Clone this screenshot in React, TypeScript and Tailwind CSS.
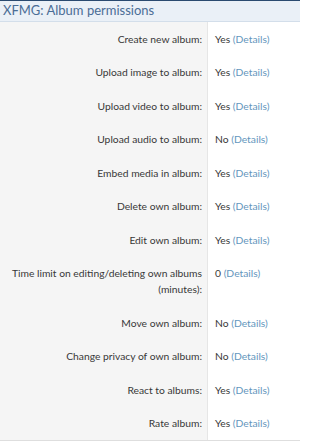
import React from "react";

type Perm = { label: React.ReactNode; value: string };

const perms: Perm[] = [
  { label: "Create new album:", value: "Yes" },
  { label: "Upload image to album:", value: "Yes" },
  { label: "Upload video to album:", value: "Yes" },
  { label: "Upload audio to album:", value: "No" },
  { label: "Embed media in album:", value: "Yes" },
  { label: "Delete own album:", value: "Yes" },
  { label: "Edit own album:", value: "Yes" },
  {
    label: (
      <>
        Time limit on editing/deleting own albums
        <br />
        (minutes):
      </>
    ),
    value: "0",
  },
  { label: "Move own album:", value: "No" },
  { label: "Change privacy of own album:", value: "No" },
  { label: "React to albums:", value: "Yes" },
  { label: "Rate album:", value: "Yes" },
];

export default function App() {
  return (
    <div
      className="w-[300px] h-[441px] overflow-hidden bg-white"
      style={{ fontFamily: 'Lato, "Noto Sans", sans-serif' }}
    >
      {/* Block header */}
      <div className="h-[22px] border-t border-[#2a4a70] border-b border-b-[#d3deea] bg-[#eaf0f7] pl-[3px] text-[13px] leading-[19px] text-[#4a6d96]">
        XFMG: Album permissions
      </div>

      {/* Permission rows */}
      <div className="border-b border-[#dedede]">
        {perms.map((p, i) => (
          <div key={i} className="flex text-[10.3px] leading-[16px]">
            <div className="w-[208px] shrink-0 whitespace-nowrap bg-[#f5f5f5] border-r border-[#e6e6e6] py-[8.75px] pr-[5px] text-right text-[#383838]">
              {p.label}
            </div>
            <div className="flex-1 whitespace-nowrap py-[8.75px] pl-[7px] text-[#383838]">
              {p.value} <span className="text-[#6396bd]">(Details)</span>
            </div>
          </div>
        ))}
      </div>
    </div>
  );
}
